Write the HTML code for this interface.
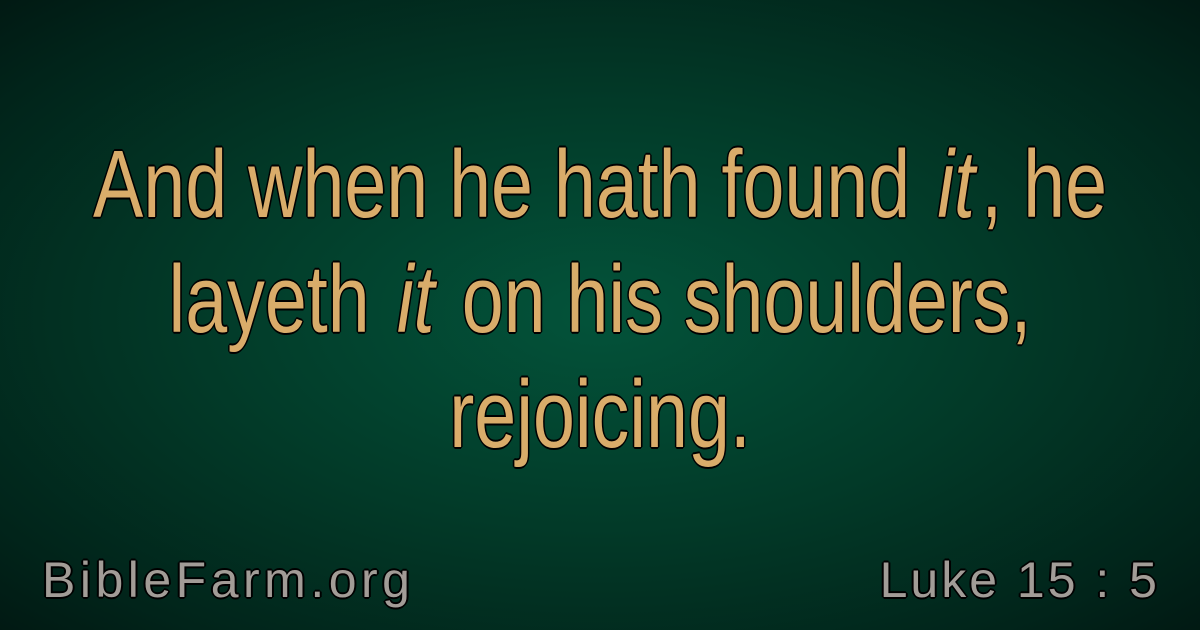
<!DOCTYPE html>
<html><head><meta charset="utf-8"><style>
html,body{margin:0;padding:0}
body{width:1200px;height:630px;overflow:hidden;position:relative;
background:radial-gradient(ellipse 75% 75% at 50% 50%,#03533a 0%,#023a28 45%,#01241a 80%,#011510 100%);}
.line{position:absolute;left:-300px;width:1800px;text-align:center;white-space:nowrap;
font-family:"Liberation Sans",sans-serif;font-size:96px;line-height:115px;color:#d9ac6a;
transform:scaleX(0.785);transform-origin:900px 0;
text-shadow:-2px 0 #000,2px 0 #000,0 -2px #000,0 2px #000,-1px -1px #000,1px 1px #000,-1px 1px #000,1px -1px #000;}
.line i{padding:0 8px}
.b{position:absolute;top:551px;font-family:"Liberation Sans",sans-serif;font-size:50px;color:#a29c97;white-space:nowrap;
text-shadow:-2px 0 #000,2px 0 #000,0 -2px #000,0 2px #000,-1px -1px #000,1px 1px #000,-1px 1px #000,1px -1px #000;}
</style></head><body>
<div class="line" style="top:127px">And when he hath found <i>it</i>, he</div>
<div class="line" style="top:242px">layeth <i>it</i> on his shoulders,</div>
<div class="line" style="top:357px">rejoicing.</div>
<div class="b" style="left:42px;letter-spacing:4.5px">BibleFarm.org</div>
<div class="b" style="right:40px;letter-spacing:3px">Luke 15 : 5</div>
</body></html>
